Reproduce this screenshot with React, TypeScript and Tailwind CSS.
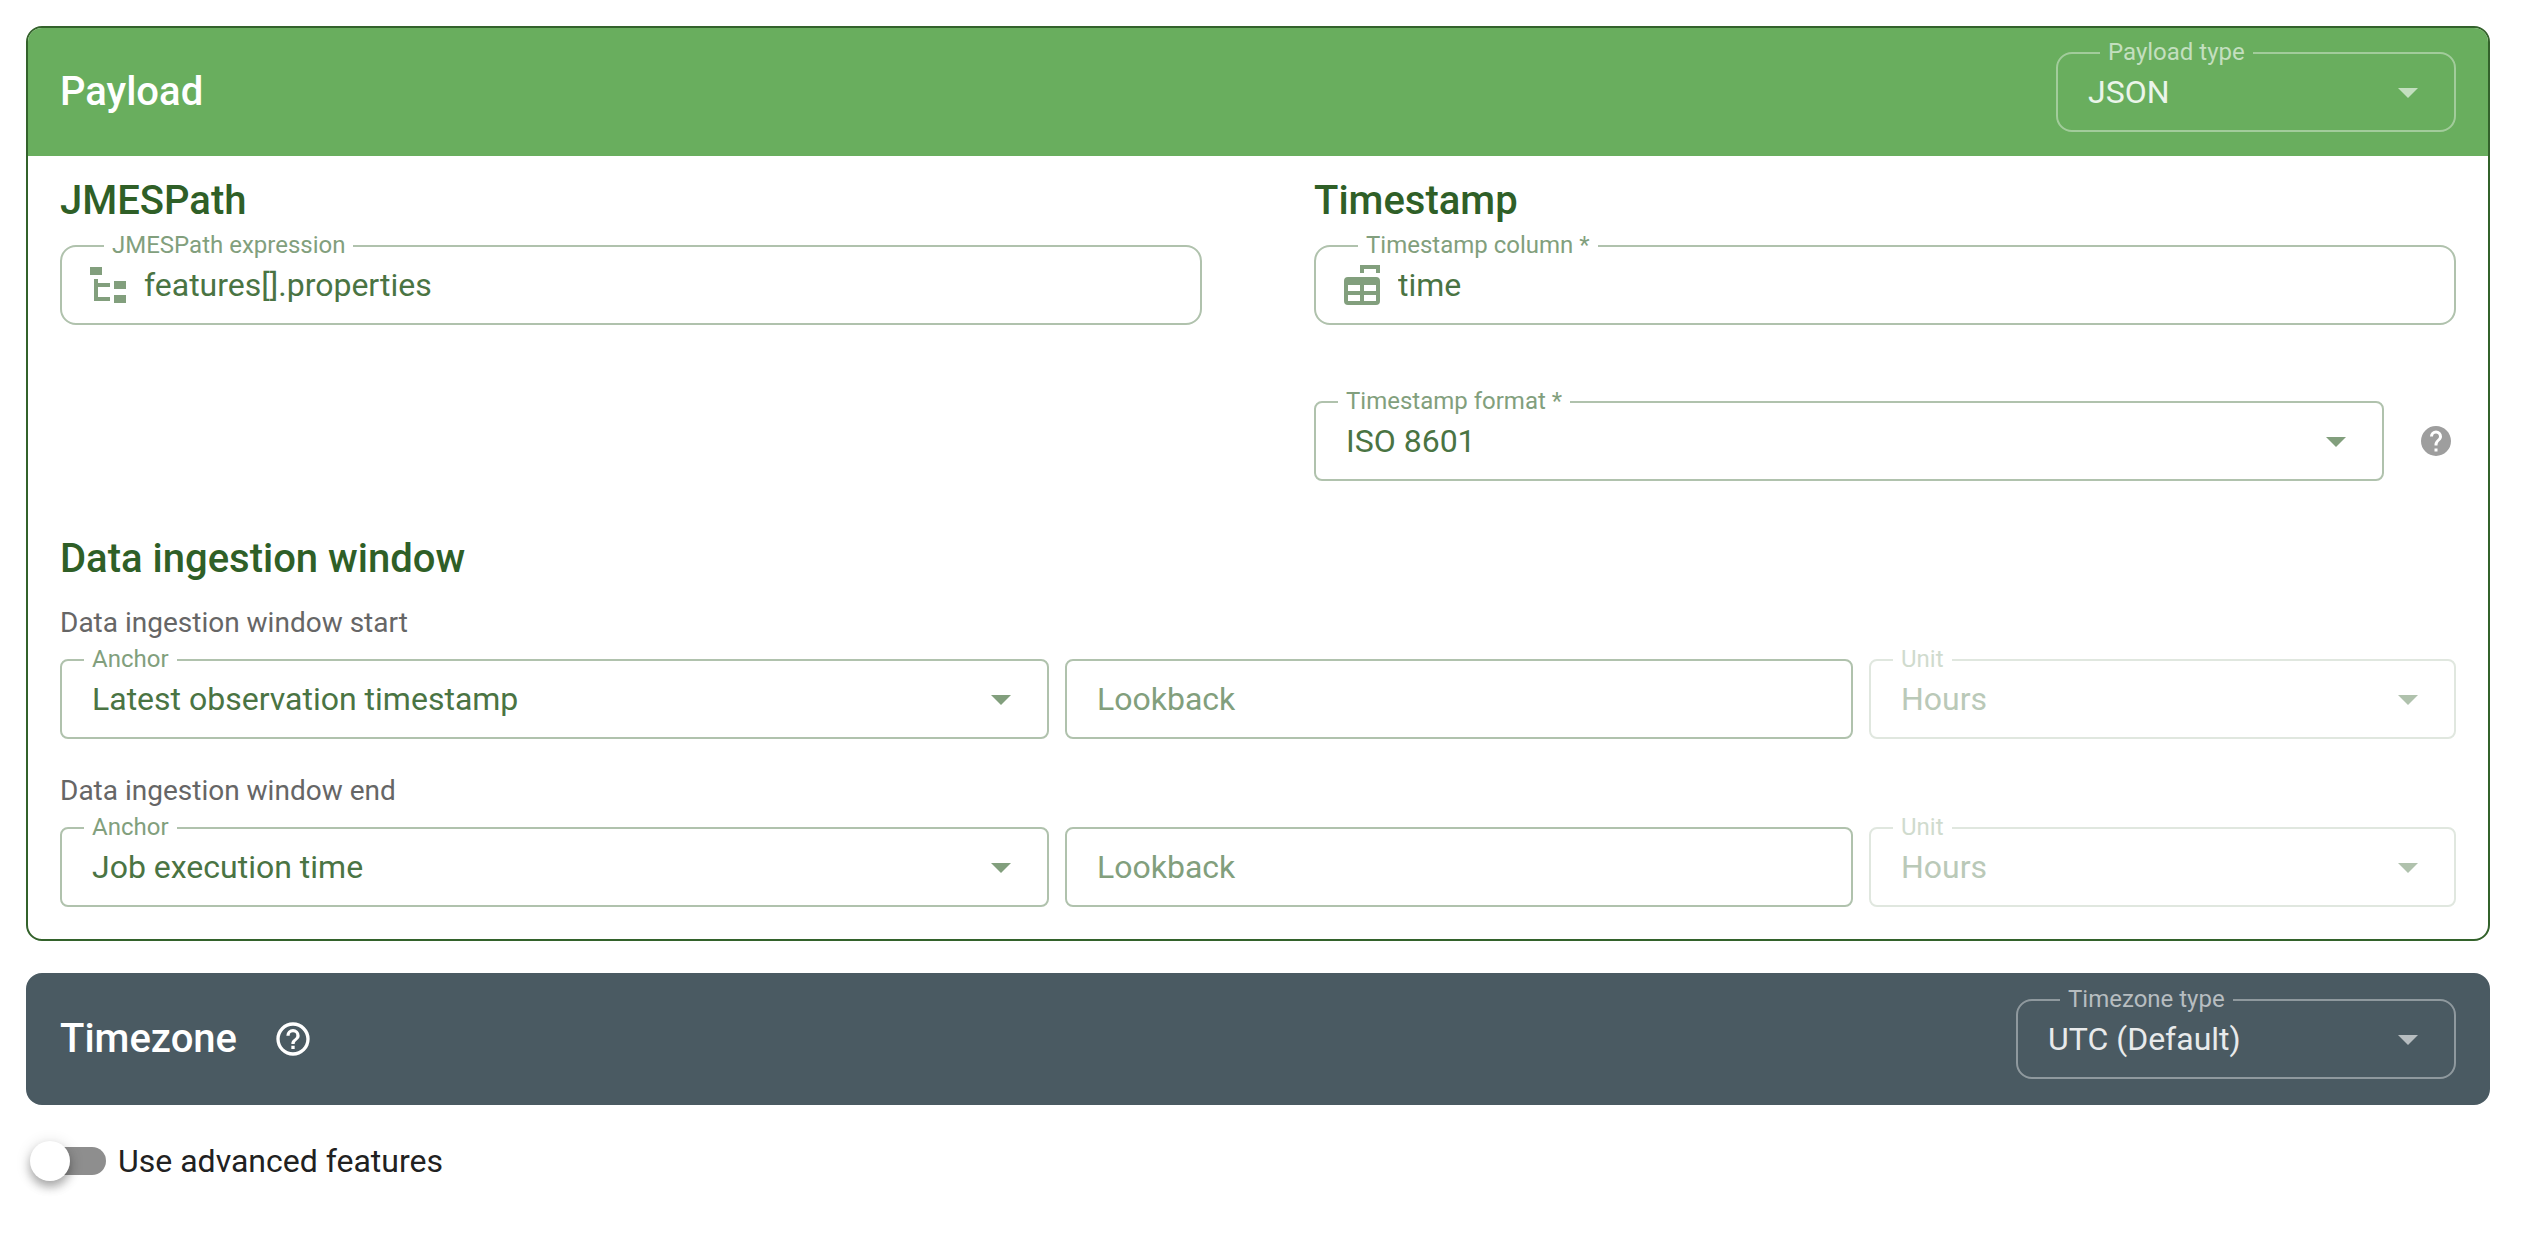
import { useState } from "react";
import type { ReactNode } from "react";
import clsx from "clsx";

type Tone = "green" | "payload" | "timezone";

const tones = {
  green: {
    border: "border-[#b0c2ad]",
    label: "bg-white text-[#829f7d]",
    value: "text-[#4a7443] placeholder:text-[#829f7d]",
    icon: "text-[#829f7d]",
  },
  disabled: {
    border: "border-[#e0e7df]",
    label: "bg-white text-[#d0dbce]",
    value: "text-[#bac9b8]",
    icon: "text-[#b0c2ad]",
  },
  payload: {
    border: "border-[#a2cc9b]",
    label: "bg-[#69ae5e] text-[#c3dfbf]",
    value: "text-[#ebf5ea]",
    icon: "text-[#c3dfbf]",
  },
  timezone: {
    border: "border-[#8f999e]",
    label: "bg-[#4a5a62] text-[#b7bdc0]",
    value: "text-[#e8eaeb]",
    icon: "text-[#b7bdc0]",
  },
};

function Icon({ path, className }: { path: string; className: string }) {
  return (
    <svg viewBox="0 0 24 24" fill="currentColor" aria-hidden="true" className={className}>
      <path fillRule="evenodd" d={path} />
    </svg>
  );
}

const icons = {
  tree: "M3,3H9V7H3V3M15,10H21V14H15V10M15,17H21V21H15V17M13,13H7V18H13V20H5V9H7V11H13V13Z",
  table:
    "M11,2V6H13V4H19V6H21V2H11M5,8H19A2,2 0 0,1 21,10V20A2,2 0 0,1 19,22H5A2,2 0 0,1 3,20V10A2,2 0 0,1 5,8M5,12V15H11V12H5M13,12V15H19V12H13M5,17V20H11V17H5M13,17V20H19V17H13Z",
  down: "M7,10L12,15L17,10H7Z",
  help: "M15.07,11.25L14.17,12.17C13.45,12.89 13,13.5 13,15H11V14.5C11,13.39 11.45,12.39 12.17,11.67L13.41,10.41C13.78,10.05 14,9.55 14,9C14,7.89 13.1,7 12,7A2,2 0 0,0 10,9H8A4,4 0 0,1 12,5A4,4 0 0,1 16,9C16,9.88 15.64,10.67 15.07,11.25M13,19H11V17H13M12,2A10,10 0 0,0 2,12A10,10 0 0,0 12,22A10,10 0 0,0 22,12C22,6.47 17.5,2 12,2Z",
  helpOutline:
    "M11,18H13V16H11V18M12,2A10,10 0 0,0 2,12A10,10 0 0,0 12,22A10,10 0 0,0 22,12A10,10 0 0,0 12,2M12,20C7.59,20 4,16.41 4,12C4,7.59 7.59,4 12,4C16.41,4 20,7.59 20,12C20,16.41 16.41,20 12,20M12,6A4,4 0 0,0 8,10H10A2,2 0 0,1 12,8A2,2 0 0,1 14,10C14,12 11,11.75 11,15H13C13,12.75 16,12.5 16,10A4,4 0 0,0 12,6Z",
};

interface FieldProps {
  id: string;
  label?: string;
  tone?: Tone;
  rounded?: boolean;
  disabled?: boolean;
  className?: string;
  children: ReactNode;
}

function Field({ id, label, tone = "green", rounded, disabled, className, children }: FieldProps) {
  const t = tones[disabled ? "disabled" : tone];
  return (
    <div
      className={clsx(
        "relative flex h-20 items-center border-2",
        rounded ? "rounded-2xl" : "rounded-lg",
        t.border,
        className
      )}
    >
      {label && (
        <label
          htmlFor={id}
          className={clsx(
            "absolute -top-4 px-2 text-2xl leading-7",
            rounded ? "left-[42px]" : "left-[22px]",
            t.label
          )}
        >
          {label}
        </label>
      )}
      {children}
    </div>
  );
}

interface SelectFieldProps extends Omit<FieldProps, "children"> {
  options: string[];
}

function SelectField({ options, ...field }: SelectFieldProps) {
  const [value, setValue] = useState(options[0]);
  const t = tones[field.disabled ? "disabled" : field.tone ?? "green"];
  return (
    <Field {...field}>
      <select
        id={field.id}
        value={value}
        disabled={field.disabled}
        onChange={(e) => setValue(e.target.value)}
        className={clsx(
          "h-full w-full appearance-none bg-transparent pr-20 pl-[30px] text-[32px] leading-10 opacity-100 outline-none",
          t.value
        )}
      >
        {options.map((o) => (
          <option key={o}>{o}</option>
        ))}
      </select>
      <Icon
        path={icons.down}
        className={clsx("pointer-events-none absolute right-[22px] size-12", t.icon)}
      />
    </Field>
  );
}

interface TextFieldProps extends Omit<FieldProps, "children"> {
  icon?: string;
  initial?: string;
  placeholder?: string;
}

function TextField({ icon, initial = "", placeholder, ...field }: TextFieldProps) {
  const [value, setValue] = useState(initial);
  return (
    <Field {...field}>
      {icon && <Icon path={icon} className={clsx("ml-[22px] size-12 shrink-0", tones.green.icon)} />}
      <input
        id={field.id}
        type="text"
        value={value}
        placeholder={placeholder}
        aria-label={field.label ? undefined : placeholder}
        onChange={(e) => setValue(e.target.value)}
        className={clsx(
          "h-full w-full min-w-0 bg-transparent pr-6 text-[32px] leading-10 outline-none",
          icon ? "pl-3" : "pl-[30px]",
          tones.green.value
        )}
      />
    </Field>
  );
}

function WindowRow({ id, title, anchors }: { id: string; title: string; anchors: string[] }) {
  return (
    <div className="flex flex-col gap-4">
      <h3 className="text-[28px] leading-10 text-[#666666]">{title}</h3>
      <div className="grid grid-cols-12 gap-4">
        <SelectField id={`${id}-anchor`} label="Anchor" options={anchors} className="col-span-5" />
        <TextField id={`${id}-lookback`} placeholder="Lookback" className="col-span-4" />
        <SelectField
          id={`${id}-unit`}
          label="Unit"
          options={["Hours", "Days"]}
          disabled
          className="col-span-3"
        />
      </div>
    </div>
  );
}

export default function App() {
  const [advanced, setAdvanced] = useState(false);

  return (
    <main className="bg-white pt-[26px] pr-[38px] pb-12 pl-[26px] font-[Roboto,sans-serif]">
      <section className="overflow-hidden rounded-2xl border-2 border-[#33622b]">
        <header className="flex items-center justify-between bg-[#69ae5e] px-8 py-6">
          <h1 className="text-[40px] leading-12 font-medium text-white">Payload</h1>
          <SelectField
            id="payload-type"
            label="Payload type"
            tone="payload"
            rounded
            options={["JSON", "CSV"]}
            className="w-[400px]"
          />
        </header>

        <div className="px-8 pt-[21px] pb-8">
          <div className="grid grid-cols-2 gap-28">
            <div>
              <h2 className="mb-5 text-[40px] leading-12 font-medium text-[#2f5f27]">JMESPath</h2>
              <TextField
                id="jmespath"
                label="JMESPath expression"
                icon={icons.tree}
                initial="features[].properties"
                rounded
              />
            </div>
            <div>
              <h2 className="mb-5 text-[40px] leading-12 font-medium text-[#2f5f27]">Timestamp</h2>
              <TextField
                id="timestamp-column"
                label="Timestamp column *"
                icon={icons.table}
                initial="time"
                rounded
              />
              <div className="mt-19 flex items-center">
                <SelectField
                  id="timestamp-format"
                  label="Timestamp format *"
                  options={["ISO 8601", "Custom"]}
                  className="flex-1"
                />
                <button
                  type="button"
                  aria-label="Timestamp format help"
                  className="ml-[34px] w-[38px] text-[#9e9e9e]"
                >
                  <Icon path={icons.help} className="size-9" />
                </button>
              </div>
            </div>
          </div>

          <h2 className="mt-[54px] mb-5 text-[40px] leading-12 font-medium text-[#2f5f27]">
            Data ingestion window
          </h2>
          <div className="flex flex-col gap-8">
            <WindowRow
              id="start"
              title="Data ingestion window start"
              anchors={["Latest observation timestamp", "Job execution time"]}
            />
            <WindowRow
              id="end"
              title="Data ingestion window end"
              anchors={["Job execution time", "Latest observation timestamp"]}
            />
          </div>
        </div>
      </section>

      <section className="mt-8 rounded-2xl border-2 border-[#4a5a62] bg-[#4a5a62]">
        <header className="flex items-center justify-between px-8 py-6">
          <div className="flex items-center gap-9 text-white">
            <h1 className="text-[40px] leading-12 font-medium">Timezone</h1>
            <button type="button" aria-label="Timezone help">
              <Icon path={icons.helpOutline} className="size-10" />
            </button>
          </div>
          <SelectField
            id="timezone-type"
            label="Timezone type"
            tone="timezone"
            rounded
            options={["UTC (Default)", "Custom"]}
            className="w-[440px]"
          />
        </header>
      </section>

      <label className="mt-8 ml-1 inline-flex h-12 items-center text-[32px] leading-10 text-[#212121]">
        <input
          type="checkbox"
          role="switch"
          checked={advanced}
          onChange={(e) => setAdvanced(e.target.checked)}
          className="peer sr-only"
        />
        <span className="ml-2 flex h-7 w-17 items-center rounded-full bg-[#8e8e8e] peer-checked:bg-[#69ae5e]">
          <span
            className={clsx(
              "size-10 shrink-0 rounded-full bg-white shadow-[0_6px_10px_rgba(0,0,0,0.28),0_2px_16px_rgba(0,0,0,0.14)]",
              advanced ? "ml-9" : "-ml-2"
            )}
          />
        </span>
        <span className="ml-3">Use advanced features</span>
      </label>
    </main>
  );
}
